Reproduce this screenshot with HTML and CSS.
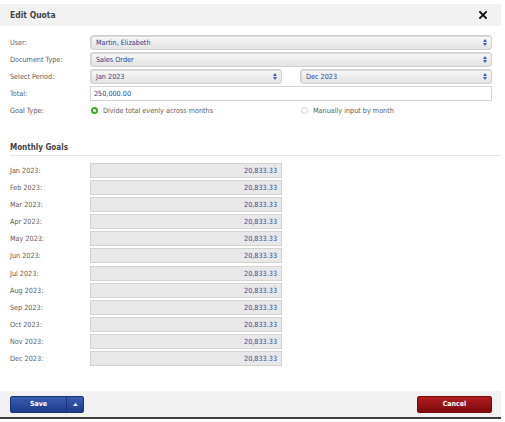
FILE: index.html
```html
<!DOCTYPE html>
<html>
<head>
<meta charset="utf-8">
<link rel="stylesheet" href="styles.css">
</head>
<body>
<div class="dialog">
  <div class="header">
    <span class="title">Edit Quota</span>
    <svg class="close" width="8" height="8" viewBox="0 0 8 8"><path d="M1 1L7 7M7 1L1 7" stroke="#111" stroke-width="1.9" stroke-linecap="square"/></svg>
  </div>
  <div class="content">
    <div class="form">
      <div class="label">User:</div>
      <div class="field select"><span>Martin, Elizabeth</span><svg class="arr" width="4" height="7" viewBox="0 0 4 7"><path d="M0 3L2 0L4 3Z M0 4L2 7L4 4Z" fill="#3d5cb8"/></svg></div>
      <div class="label">Document Type:</div>
      <div class="field select"><span>Sales Order</span><svg class="arr" width="4" height="7" viewBox="0 0 4 7"><path d="M0 3L2 0L4 3Z M0 4L2 7L4 4Z" fill="#3d5cb8"/></svg></div>
      <div class="label">Select Period:</div>
      <div class="field pair">
        <div class="select"><span>Jan 2023</span><svg class="arr" width="4" height="7" viewBox="0 0 4 7"><path d="M0 3L2 0L4 3Z M0 4L2 7L4 4Z" fill="#3d5cb8"/></svg></div>
        <div class="select"><span>Dec 2023</span><svg class="arr" width="4" height="7" viewBox="0 0 4 7"><path d="M0 3L2 0L4 3Z M0 4L2 7L4 4Z" fill="#3d5cb8"/></svg></div>
      </div>
      <div class="label">Total:</div>
      <div class="field input">250,000.00</div>
      <div class="label">Goal Type:</div>
      <div class="field pair radios">
        <div class="radio"><span class="dot on"></span>Divide total evenly across months</div>
        <div class="radio"><span class="dot"></span>Manually input by month</div>
      </div>
    </div>
    <div class="section">Monthly Goals</div>
    <div class="months">
      <div class="label">Jan 2023:</div><div class="mbox">20,833.33</div>
      <div class="label">Feb 2023:</div><div class="mbox">20,833.33</div>
      <div class="label">Mar 2023:</div><div class="mbox">20,833.33</div>
      <div class="label">Apr 2023:</div><div class="mbox">20,833.33</div>
      <div class="label">May 2023:</div><div class="mbox">20,833.33</div>
      <div class="label">Jun 2023:</div><div class="mbox">20,833.33</div>
      <div class="label">Jul 2023:</div><div class="mbox">20,833.33</div>
      <div class="label">Aug 2023:</div><div class="mbox">20,833.33</div>
      <div class="label">Sep 2023:</div><div class="mbox">20,833.33</div>
      <div class="label">Oct 2023:</div><div class="mbox">20,833.33</div>
      <div class="label">Nov 2023:</div><div class="mbox">20,833.33</div>
      <div class="label">Dec 2023:</div><div class="mbox">20,833.33</div>
    </div>
  </div>
  <div class="footer">
    <div class="btn save"><span class="save-main">Save</span><span class="save-caret"><svg width="5" height="3" viewBox="0 0 5 3"><path d="M0 3L2.5 0L5 3Z" fill="#fff"/></svg></span></div>
    <div class="btn cancel">Cancel</div>
  </div>
</div>
</body>
</html>
```
FILE: styles.css
```css
html, body {
  margin: 0;
  padding: 0;
  background: #fff;
}
body {
  font-family: "DejaVu Sans Condensed", "DejaVu Sans", sans-serif;
  font-size: 7.2px;
  color: #5c5c5c;
}
.dialog {
  width: 501px;
  height: 419px;
  display: flex;
  flex-direction: column;
  border-bottom: 2px solid #3f3f3f;
  box-sizing: border-box;
}
.header {
  margin-top: 4px;
  height: 22px;
  background: #f2f2f2;
  display: flex;
  align-items: center;
  justify-content: space-between;
  padding: 0 14px 0 10px;
}
.title {
  font-weight: bold;
  font-size: 8.5px;
  color: #444;
}
.close { display: block; }
.content {
  flex: 1;
  padding: 9px 9px 0 10px;
}
.form, .months {
  display: grid;
  grid-template-columns: 80px 402px;
  row-gap: 2px;
  align-items: center;
}
.label {
  height: 15px;
  line-height: 15px;
}
.field { height: 15px; }
.select {
  height: 15px;
  box-sizing: border-box;
  border: 1px solid #cfcfcf;
  border-radius: 3px;
  background: linear-gradient(#f8f8f8, #e3e3e3);
  box-shadow: inset 1px 1px 0 #d9d9d9;
  display: flex;
  align-items: center;
  justify-content: space-between;
  padding: 0 4px 0 5px;
  color: #2d3d8e;
}
.arr { display: block; }
.pair {
  display: grid;
  grid-template-columns: 192px 192px;
  column-gap: 18px;
}
.input {
  box-sizing: border-box;
  border: 1px solid #d4d4d4;
  background: #fff;
  line-height: 13px;
  padding-left: 3px;
  color: #2d3d8e;
}
.radios { align-items: center; }
.radio {
  display: flex;
  align-items: center;
  color: #5c5c5c;
}
.dot {
  width: 5px;
  height: 5px;
  border-radius: 50%;
  border: 1px solid #cfcfcf;
  background: #fff;
  margin: 0 5px 0 1px;
}
.dot.on {
  border: 2px solid #3eab2a;
  width: 3px;
  height: 3px;
}
.section {
  margin-top: 25px;
  font-weight: bold;
  font-size: 8px;
  color: #444;
  padding-bottom: 3px;
  border-bottom: 1px solid #e6e6e6;
  margin-right: -9px;
  margin-bottom: 7px;
}
.months {
  row-gap: 2.1px;
  grid-template-columns: 80px 192px;
}
.mbox {
  height: 15px;
  box-sizing: border-box;
  border: 1px solid #d2d2d2;
  background: #e8e8e8;
  text-align: right;
  line-height: 13px;
  padding-right: 4px;
  color: #3445a0;
}
.footer {
  height: 26px;
  background: #f2f2f2;
  display: flex;
  align-items: center;
  justify-content: space-between;
  padding: 0 9px 0 10px;
}
.btn {
  height: 17px;
  box-sizing: border-box;
  border-radius: 2px;
  color: #fff;
  font-weight: bold;
  font-size: 7px;
  display: flex;
  align-items: center;
}
.save {
  width: 74px;
  background: linear-gradient(#3a5cb0, #1f3c8a);
  border: 1px solid #1a3278;
}
.save-main {
  width: 55px;
  text-align: center;
  border-right: 1px solid #1a3374;
  height: 15px;
  line-height: 15px;
}
.save-caret {
  flex: 1;
  display: flex;
  justify-content: center;
  align-items: center;
  height: 15px;
}
.save-caret svg { display: block; }
.cancel {
  width: 75px;
  justify-content: center;
  background: linear-gradient(#b01d20, #7e0a0c);
  border: 1px solid #760a0c;
}
```
